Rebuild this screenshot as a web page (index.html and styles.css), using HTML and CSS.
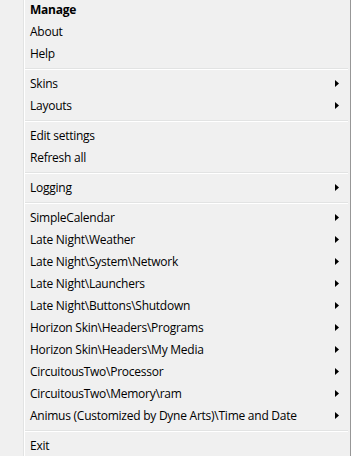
FILE: index.html
```html
<!DOCTYPE html>
<html lang="en">
<head>
    <meta charset="UTF-8">
    <meta name="viewport" content="width=device-width, initial-scale=1.0">
    <title>Rainmeter menu</title>
    <link rel="stylesheet" href="styles.css">
</head>
<body>
    <div class="menu">
        <div class="item bold">Manage</div>
        <div class="item">About</div>
        <div class="item">Help</div>
        <div class="sep"></div>

        <div class="item">Skins <svg class="arrow" width="4" height="7"><path d="M0 0 L4 3.5 L0 7 Z"/></svg></div>
        <div class="item">Layouts <svg class="arrow" width="4" height="7"><path d="M0 0 L4 3.5 L0 7 Z"/></svg></div>
        <div class="sep"></div>

        <div class="item">Edit settings</div>
        <div class="item">Refresh all</div>
        <div class="sep"></div>

        <div class="item">Logging <svg class="arrow" width="4" height="7"><path d="M0 0 L4 3.5 L0 7 Z"/></svg></div>
        <div class="sep"></div>

        <div class="item">SimpleCalendar <svg class="arrow" width="4" height="7"><path d="M0 0 L4 3.5 L0 7 Z"/></svg></div>
        <div class="item">Late Night\Weather <svg class="arrow" width="4" height="7"><path d="M0 0 L4 3.5 L0 7 Z"/></svg></div>
        <div class="item">Late Night\System\Network <svg class="arrow" width="4" height="7"><path d="M0 0 L4 3.5 L0 7 Z"/></svg></div>
        <div class="item">Late Night\Launchers <svg class="arrow" width="4" height="7"><path d="M0 0 L4 3.5 L0 7 Z"/></svg></div>
        <div class="item">Late Night\Buttons\Shutdown <svg class="arrow" width="4" height="7"><path d="M0 0 L4 3.5 L0 7 Z"/></svg></div>
        <div class="item">Horizon Skin\Headers\Programs <svg class="arrow" width="4" height="7"><path d="M0 0 L4 3.5 L0 7 Z"/></svg></div>
        <div class="item">Horizon Skin\Headers\My Media <svg class="arrow" width="4" height="7"><path d="M0 0 L4 3.5 L0 7 Z"/></svg></div>
        <div class="item">CircuitousTwo\Processor <svg class="arrow" width="4" height="7"><path d="M0 0 L4 3.5 L0 7 Z"/></svg></div>
        <div class="item">CircuitousTwo\Memory\ram <svg class="arrow" width="4" height="7"><path d="M0 0 L4 3.5 L0 7 Z"/></svg></div>
        <div class="item">Animus (Customized by Dyne Arts)\Time and Date <svg class="arrow" width="4" height="7"><path d="M0 0 L4 3.5 L0 7 Z"/></svg></div>
        <div class="sep"></div>

        <div class="item">Exit</div>
    </div>
</body>
</html>
```

FILE: styles.css
```css
body {
    margin: 0;
    background-color: #ffffff;
    font-family: "Open Sans", "Noto Sans", sans-serif;
    font-size: 12px;
    letter-spacing: -0.25px;
    color: #000000;
    overflow: hidden;
}
.menu {
    width: 350px;
    margin-top: -2px;
    border-right: 1px solid #979797;
    background: linear-gradient(to right, #f0f0f0 23px, #e2e3e3 23px, #e2e3e3 24px, #ffffff 24px, #ffffff 25px, #f0f0f0 25px);
    display: flex;
    flex-direction: column;
}
.item {
    height: 22px;
    padding-left: 30px;
    padding-right: 11px;
    display: flex;
    align-items: center;
    justify-content: space-between;
    white-space: nowrap;
}
.bold {
    font-weight: bold;
}
.arrow {
    fill: #000000;
}
.sep {
    height: 8px;
    margin-left: 25px;
    margin-right: 2px;
    box-sizing: border-box;
    padding-top: 4px;
}
.sep::before {
    content: "";
    display: block;
    height: 1px;
    background-color: #e2e3e3;
    border-bottom: 1px solid #ffffff;
}
```
